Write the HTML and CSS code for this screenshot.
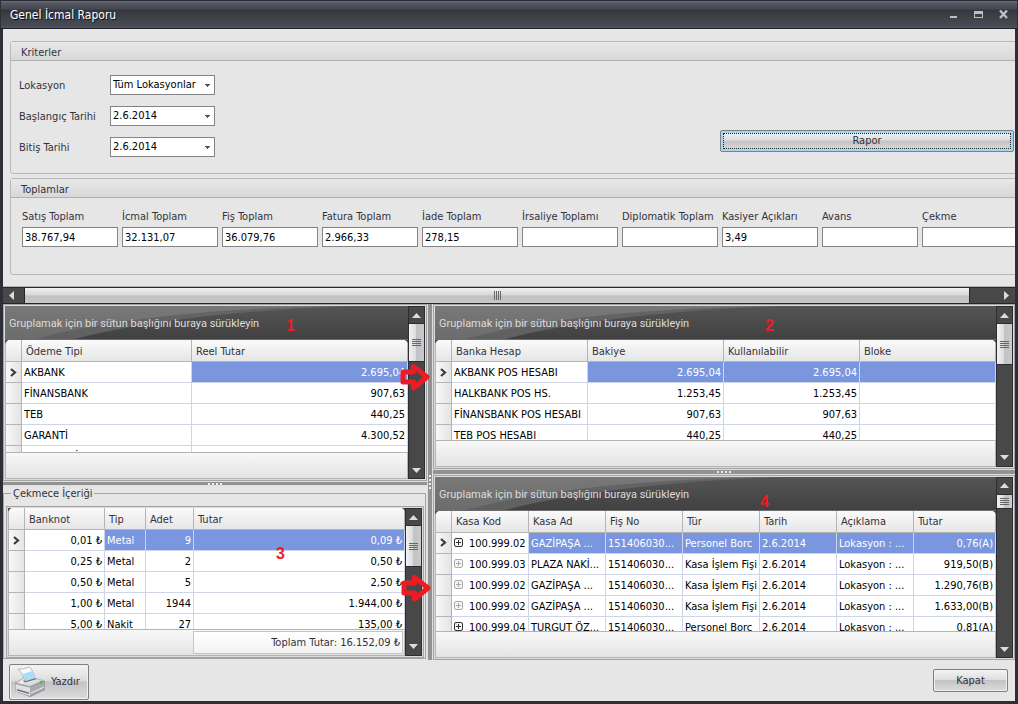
FILE: index.html
```html
<!DOCTYPE html>
<html lang="tr">
<head>
<meta charset="utf-8">
<title>Genel İcmal Raporu</title>
<link rel="stylesheet" href="styles.css">
</head>
<body>
<svg class="defs" aria-hidden="true">
  <defs>
    <linearGradient id="dark" x1="0" y1="0" x2="0" y2="1"><stop offset="0" stop-color="#555"/><stop offset="1" stop-color="#414141"/></linearGradient>
    <linearGradient id="mid" x1="0" y1="0" x2="0" y2="1"><stop offset="0" stop-color="#646464"/><stop offset="1" stop-color="#606060"/></linearGradient>
    <linearGradient id="top" x1="0" y1="0" x2="1" y2="1"><stop offset="0" stop-color="#fff"/><stop offset="1" stop-color="#c4c6ca"/></linearGradient>
    <symbol id="swoosh" viewBox="0 0 1200 33">
      <path d="M30 33C100 14 200 3 330 0H1200V33Z" fill="url(#mid)"/>
      <path d="M70 33C130 17 230 4 350 0H1200V33Z" fill="url(#dark)"/>
    </symbol>
    <symbol id="arrow" viewBox="0 0 30 28">
      <path d="M3 9H13.500V3.500L27 14L13.500 25V19H3Z" fill="none" stroke="#ed1c24" stroke-width="5" stroke-linejoin="round"/>
    </symbol>
    <symbol id="up" viewBox="0 0 9 5"><path d="M0 5L4.5 0L9 5Z" fill="#dcdcdc"/></symbol>
    <symbol id="down" viewBox="0 0 9 5"><path d="M0 0L4.5 5L9 0Z" fill="#dcdcdc"/></symbol>
    <symbol id="pointer" viewBox="0 0 7 9"><path d="M1 1L5 4.5L1 8" fill="none" stroke="#3c3c3c" stroke-width="2.2"/></symbol>
    <symbol id="plus" viewBox="0 0 9 9"><rect x=".5" y=".5" width="8" height="8" rx="1.5" fill="#f4f4f4" stroke="currentColor"/><path d="M2 4.5H7M4.5 2V7" stroke="currentColor"/></symbol>
  </defs>
</svg>
<div class="window">
  <header class="titlebar">
    <h1>Genel İcmal Raporu</h1>
    <div class="window-buttons">
      <button type="button" aria-label="Simge durumuna küçült"><svg width="9" height="9"><path d="M1 6h7v2H1z" fill="#b9c0ca"/></svg></button>
      <button type="button" aria-label="Ekranı kapla"><svg width="9" height="9"><path d="M0 1h9v7H0zM1 4v3h7V4z" fill="#b9c0ca" fill-rule="evenodd"/></svg></button>
      <button type="button" aria-label="Pencereyi kapat"><svg width="9" height="9"><path d="M1 .5L8 8M8 .5L1 8" stroke="#b9c0ca" stroke-width="2.3"/></svg></button>
    </div>
  </header>

  <main class="client">
    <section class="criteria">
      <div class="criteria-content">
        <section class="group">
          <h2>Kriterler</h2>
          <form class="filters">
            <div class="fields">
              <label for="lok">Lokasyon</label>
              <select id="lok"><option>Tüm Lokasyonlar</option></select>
              <label for="bas">Başlangıç Tarihi</label>
              <select id="bas"><option>2.6.2014</option></select>
              <label for="bit">Bitiş Tarihi</label>
              <select id="bit"><option>2.6.2014</option></select>
            </div>
            <button type="button" class="btn report">Rapor</button>
          </form>
        </section>
        <section class="group">
          <h2>Toplamlar</h2>
          <div class="totals">
            <label>Satış Toplam<input value="38.767,94"></label>
            <label>İcmal Toplam<input value="32.131,07"></label>
            <label>Fiş Toplam<input value="36.079,76"></label>
            <label>Fatura Toplam<input value="2.966,33"></label>
            <label>İade Toplam<input value="278,15"></label>
            <label>İrsaliye Toplamı<input value=""></label>
            <label>Diplomatik Toplam<input value=""></label>
            <label>Kasiyer Açıkları<input value="3,49"></label>
            <label>Avans<input value=""></label>
            <label>Çekme<input value=""></label>
          </div>
        </section>
      </div>
    </section>
    <div class="hscroll">
      <button type="button" aria-label="Sola kaydır"><svg width="6" height="9"><path d="M6 0L1 4.5L6 9Z" fill="#dcdcdc"/></svg></button>
      <div class="hthumb"><i></i><i></i><i></i><i></i></div>
      <button type="button" class="end" aria-label="Sağa kaydır"><svg width="6" height="9"><path d="M0 0L5 4.5L0 9Z" fill="#dcdcdc"/></svg></button>
    </div>

    <div class="split">
      <div class="side left">
        <section class="panel">
          <div class="grid">
            <div class="groupbar"><svg class="swoosh" preserveAspectRatio="none"><use href="#swoosh" width="1200" height="33"/></svg><span>Gruplamak için bir sütun başlığını buraya sürükleyin</span></div>
            <div class="rows">
              <table>
                <colgroup><col class="c-ind"><col class="c-170"><col></colgroup>
                <thead><tr><th></th><th>Ödeme Tipi</th><th>Reel Tutar</th></tr></thead>
                <tbody>
                  <tr class="sel"><td><svg class="pointer"><use href="#pointer"/></svg></td><td class="focus">AKBANK</td><td class="num">2.695,04</td></tr>
                  <tr><td></td><td>FİNANSBANK</td><td class="num">907,63</td></tr>
                  <tr><td></td><td>TEB</td><td class="num">440,25</td></tr>
                  <tr><td></td><td>GARANTİ</td><td class="num">4.300,52</td></tr>
                  <tr><td></td><td>YAPI KREDİ</td><td class="num"></td></tr>
                </tbody>
              </table>
            </div>
            <div class="footer"></div>
          </div>
          <div class="vscroll">
            <button type="button" aria-label="Yukarı"><svg><use href="#up"/></svg></button>
            <div class="vthumb t36"><i></i><i></i><i></i><i></i></div>
            <button type="button" class="end" aria-label="Aşağı"><svg><use href="#down"/></svg></button>
          </div>
        </section>
        <div class="hsplit"><i></i><i></i><i></i><i></i></div>
        <fieldset class="drawer">
          <legend>Çekmece İçeriği</legend>
          <div class="panel">
            <div class="grid">
              <div class="rows">
                <table>
                  <colgroup><col class="c-ind"><col class="c-80"><col class="c-41"><col class="c-48"><col></colgroup>
                  <thead><tr><th></th><th>Banknot</th><th>Tip</th><th>Adet</th><th>Tutar</th></tr></thead>
                  <tbody>
                    <tr class="sel"><td><svg class="pointer"><use href="#pointer"/></svg></td><td class="num focus">0,01 ₺</td><td>Metal</td><td class="num">9</td><td class="num">0,09 ₺</td></tr>
                    <tr><td></td><td class="num">0,25 ₺</td><td>Metal</td><td class="num">2</td><td class="num">0,50 ₺</td></tr>
                    <tr><td></td><td class="num">0,50 ₺</td><td>Metal</td><td class="num">5</td><td class="num">2,50 ₺</td></tr>
                    <tr><td></td><td class="num">1,00 ₺</td><td>Metal</td><td class="num">1944</td><td class="num">1.944,00 ₺</td></tr>
                    <tr><td></td><td class="num">5,00 ₺</td><td>Nakit</td><td class="num">27</td><td class="num">135,00 ₺</td></tr>
                  </tbody>
                </table>
              </div>
              <div class="footer"><output class="sum">Toplam Tutar: 16.152,09 ₺</output></div>
            </div>
            <div class="vscroll">
              <button type="button" aria-label="Yukarı"><svg><use href="#up"/></svg></button>
              <div class="vthumb t40"><i></i><i></i><i></i><i></i></div>
              <button type="button" class="end" aria-label="Aşağı"><svg><use href="#down"/></svg></button>
            </div>
          </div>
        </fieldset>
      </div>

      <div class="vsplit"><i></i><i></i><i></i><i></i></div>

      <div class="side right">
        <section class="panel">
          <div class="grid">
            <div class="groupbar"><svg class="swoosh" preserveAspectRatio="none"><use href="#swoosh" width="1200" height="33"/></svg><span>Gruplamak için bir sütun başlığını buraya sürükleyin</span></div>
            <div class="rows">
              <table>
                <colgroup><col class="c-ind"><col class="c-136"><col class="c-136"><col class="c-136"><col></colgroup>
                <thead><tr><th></th><th>Banka Hesap</th><th>Bakiye</th><th>Kullanılabilir</th><th>Bloke</th></tr></thead>
                <tbody>
                  <tr class="sel"><td><svg class="pointer"><use href="#pointer"/></svg></td><td class="focus">AKBANK POS HESABI</td><td class="num">2.695,04</td><td class="num">2.695,04</td><td></td></tr>
                  <tr><td></td><td>HALKBANK POS HS.</td><td class="num">1.253,45</td><td class="num">1.253,45</td><td></td></tr>
                  <tr><td></td><td>FİNANSBANK POS HESABI</td><td class="num">907,63</td><td class="num">907,63</td><td></td></tr>
                  <tr><td></td><td>TEB POS HESABI</td><td class="num">440,25</td><td class="num">440,25</td><td></td></tr>
                </tbody>
              </table>
            </div>
            <div class="footer"></div>
          </div>
          <div class="vscroll">
            <button type="button" aria-label="Yukarı"><svg><use href="#up"/></svg></button>
            <div class="vthumb t40"><i></i><i></i><i></i><i></i></div>
            <button type="button" class="end" aria-label="Aşağı"><svg><use href="#down"/></svg></button>
          </div>
        </section>
        <div class="hsplit"><i></i><i></i><i></i><i></i></div>
        <section class="panel">
          <div class="grid">
            <div class="groupbar"><svg class="swoosh" preserveAspectRatio="none"><use href="#swoosh" width="1200" height="33"/></svg><span>Gruplamak için bir sütun başlığını buraya sürükleyin</span></div>
            <div class="rows">
              <table>
                <colgroup><col class="c-ind"><col class="c-77"><col class="c-77"><col class="c-77"><col class="c-77"><col class="c-77"><col class="c-77"><col></colgroup>
                <thead><tr><th></th><th>Kasa Kod</th><th>Kasa Ad</th><th>Fiş No</th><th>Tür</th><th>Tarih</th><th>Açıklama</th><th>Tutar</th></tr></thead>
                <tbody>
                  <tr class="sel"><td><svg class="pointer"><use href="#pointer"/></svg></td><td class="focus"><svg class="plus"><use href="#plus"/></svg>100.999.02</td><td>GAZİPAŞA ...</td><td>151406030...</td><td>Personel Borc</td><td>2.6.2014</td><td>Lokasyon : ...</td><td class="num">0,76(A)</td></tr>
                  <tr><td></td><td><svg class="plus dim"><use href="#plus"/></svg>100.999.03</td><td>PLAZA NAKİ...</td><td>151406030...</td><td>Kasa İşlem Fişi</td><td>2.6.2014</td><td>Lokasyon : ...</td><td class="num">919,50(B)</td></tr>
                  <tr><td></td><td><svg class="plus dim"><use href="#plus"/></svg>100.999.02</td><td>GAZİPAŞA ...</td><td>151406030...</td><td>Kasa İşlem Fişi</td><td>2.6.2014</td><td>Lokasyon : ...</td><td class="num">1.290,76(B)</td></tr>
                  <tr><td></td><td><svg class="plus dim"><use href="#plus"/></svg>100.999.02</td><td>GAZİPAŞA ...</td><td>151406030...</td><td>Kasa İşlem Fişi</td><td>2.6.2014</td><td>Lokasyon : ...</td><td class="num">1.633,00(B)</td></tr>
                  <tr><td></td><td><svg class="plus"><use href="#plus"/></svg>100.999.04</td><td>TURGUT ÖZ...</td><td>151406030...</td><td>Personel Borc</td><td>2.6.2014</td><td>Lokasyon : ...</td><td class="num">0,81(A)</td></tr>
                </tbody>
              </table>
            </div>
            <div class="footer"></div>
          </div>
          <div class="vscroll">
            <button type="button" aria-label="Yukarı"><svg><use href="#up"/></svg></button>
            <div class="vthumb t12"><i></i><i></i><i></i><i></i></div>
            <button type="button" class="end" aria-label="Aşağı"><svg><use href="#down"/></svg></button>
          </div>
        </section>
      </div>

      <b class="mark m1">1</b>
      <b class="mark m2">2</b>
      <b class="mark m3">3</b>
      <b class="mark m4">4</b>
      <svg class="arrow a1"><use href="#arrow"/></svg>
      <svg class="arrow a2"><use href="#arrow"/></svg>
    </div>

    <footer class="actions">
      <button type="button" class="btn print">
        <svg width="32" height="32" viewBox="0 0 32 32" aria-hidden="true">
          <path d="M1 17L11 11L31 15V24L16 31L1 25Z" fill="#8f9195"/>
          <path d="M2 17L12 10.500L30 14.500L16 20.500Z" fill="url(#top)" stroke="#a5a7aa" stroke-width=".6"/>
          <path d="M1.500 18L16 21.500V30L1.500 25Z" fill="#dedfe2"/>
          <path d="M16 21.500L30.500 15.500V23L16 30Z" fill="#a9abb0"/>
          <path d="M3 23L15 26.500V28L3 24.500Z" fill="#6a6d72"/>
          <path d="M17 27L30 21" fill="none" stroke="#e4e4e6" stroke-width="1.200"/>
          <path d="M9 14.500L20 11.500L23 13L11 16.500Z" fill="#6c7076"/>
          <path d="M4 3Q9 4 15 1Q18 2 21 12L11 15Q10 8 4 3Z" fill="#f6fbff" stroke="#9aa3ad" stroke-width=".7"/>
          <path d="M9 8L18 5Q20 8 21 12L11 15Q11 11 9 8Z" fill="#a8dcf7"/>
          <circle cx="27" cy="16.500" r="1.700" fill="#38d430"/>
        </svg>
        Yazdır
      </button>
      <button type="button" class="btn close">Kapat</button>
    </footer>
  </main>
</div>
</body>
</html>
```
FILE: styles.css
```css
* { box-sizing: border-box; }

html, body { height: 100%; }

body {
  margin: 0;
  font-family: "DejaVu Sans Condensed", "DejaVu Sans", sans-serif;
  font-size: 11px;
  line-height: 14px;
  color: #32323c;
}

button, input, select {
  font: inherit;
  color: inherit;
  margin: 0;
}

h1, h2 { margin: 0; font-size: inherit; font-weight: normal; }

.defs { position: absolute; width: 0; height: 0; }

.window {
  display: flex;
  flex-direction: column;
  height: 100vh;
  min-height: 620px;
  padding: 0 3px 3px;
  background: #2d2f36;
  overflow: hidden;
}

.titlebar {
  display: flex;
  justify-content: space-between;
  align-items: center;
  height: 29px;
  margin: 0 -2px;
  padding: 0 9px;
  border-top: 1px solid #2a2b33;
  border-bottom: 1px solid #1f2028;
  background: linear-gradient(#70737c 0, #555863 2px, #454852 8px, #34363b 9px, #3c3e43 14px, #4a4d57 26px, #5a5d66 27px);
}

.titlebar h1 {
  font-size: 12px;
  color: #fff;
  text-shadow: 1px 1px 0 #111;
}

.window-buttons { display: flex; gap: 16px; }

.window-buttons button {
  display: flex;
  padding: 0;
  border: 0;
  background: none;
}

.client {
  flex: 1;
  display: flex;
  flex-direction: column;
  min-height: 0;
  background: #e6e6e6;
}

/* criteria and totals */
.criteria {
  overflow: hidden;
  border-bottom: 1px solid #b5b5b5;
  flex: none;
}

.criteria-content {
  display: flex;
  flex-direction: column;
  gap: 4px;
  width: 1060px;
  padding: 12px 7px 11px;
}

.group {
  border: 1px solid #b9b9b9;
  border-radius: 3px;
}

.group h2 {
  padding: 4px 10px 0;
  border-bottom: 1px solid #b0b0b0;
  background: linear-gradient(#e8e8e8, #d8d8d8);
}

.filters {
  display: flex;
  justify-content: space-between;
  align-items: flex-end;
  padding: 14px 41px 16px 8px;
}

.fields {
  display: grid;
  grid-template-columns: 91px 105px;
  row-gap: 11px;
  align-items: center;
}

.fields label { padding-top: 2px; }

.filters .report { margin-bottom: 5px; }

select, input {
  height: 20px;
  border: 1px solid #848484;
  border-radius: 0;
  background: #fff;
  color: #000;
}

select {
  appearance: none;
  padding: 0 16px 0 2px;
  background: linear-gradient(#555, #555) 94px 8px / 5px 1px no-repeat, linear-gradient(#555, #555) 95px 9px / 3px 1px no-repeat, linear-gradient(#555, #555) 96px 10px / 1px 1px no-repeat, #fff;
}

input { width: 96px; padding: 0 2px; }

.totals {
  display: flex;
  padding: 12px 11px 27px;
}

.totals label {
  display: flex;
  flex-direction: column;
  gap: 3px;
  width: 100px;
  white-space: nowrap;
}

/* buttons */
.btn {
  border: 1px solid #808080;
  border-radius: 2px;
  background: linear-gradient(#f4f4f4, #dedede 45%, #c3c3c3 50%, #dcdcdc);
  box-shadow: inset 0 0 0 1px #f0f0f0;
}

.report {
  width: 294px;
  height: 22px;
  padding: 0;
  box-shadow: inset 0 0 0 2px #a6d6f5;
  outline: 1px dotted #222;
  outline-offset: -4px;
}

/* scroll bars */
.hscroll {
  display: flex;
  flex: none;
  height: 17px;
  border: 1px solid #25262c;
  border-width: 1px 0;
  background: #484848;
}

.hscroll button {
  display: flex;
  align-items: center;
  justify-content: flex-start;
  width: 22px;
  padding: 0 0 0 5px;
  border: 0;
  border-right: 1px solid #25262c;
  background: none;
}

.hscroll .end {
  justify-content: flex-end;
  flex: 1;
  padding: 0 5px;
  border-right: 0;
}

.hthumb {
  display: flex;
  justify-content: center;
  align-items: center;
  gap: 1px;
  width: 93.4%;
  border-right: 1px solid #25262c;
  background: linear-gradient(#f2f2f2, #d6d6d6 48%, #c0c0c2 52%, #c8c8ca);
}

.hthumb i { width: 1px; height: 9px; background: #666; }

.vscroll {
  display: flex;
  flex-direction: column;
  width: 17px;
  border: 1px solid #2c2d33;
  background: #484848;
}

.vscroll button {
  display: flex;
  justify-content: center;
  align-items: center;
  height: 16px;
  padding: 0;
  border: 0;
  background: none;
}

.vscroll .end { margin-top: auto; }
.vscroll button svg { width: 9px; height: 5px; }

.vthumb {
  display: flex;
  flex-direction: column;
  justify-content: center;
  align-items: center;
  gap: 1px;
  border: 1px solid #2c2d33;
  border-width: 1px 0;
  background: linear-gradient(90deg, #f2f2f2, #dcdcdc 45%, #c2c2c4 50%, #cacacc);
}

.vthumb i { width: 9px; height: 1px; background: #666; }
.t12 { height: 15px; }
.t36 { height: 39px; }
.t40 { height: 42px; }

/* split area */
.split {
  position: relative;
  flex: 1;
  display: grid;
  grid-template-columns: 424fr 6px 582fr;
  min-height: 0;
}

.side {
  display: grid;
  min-width: 0;
  min-height: 0;
}

.left { grid-template-rows: 178fr 5px 174fr; }
.right { grid-template-rows: 165fr 6px 186fr; }

.hsplit, .vsplit {
  display: flex;
  justify-content: center;
  align-items: center;
  gap: 2px;
  background: #929292;
  border: 1px solid #dedede;
  border-width: 1px 0;
}

.vsplit { flex-direction: column; border-width: 0 1px; }
.hsplit i, .vsplit i { width: 2px; height: 2px; background: #eee; }

.panel {
  display: flex;
  min-width: 0;
  min-height: 0;
  padding: 1px;
  border: 1px solid #a3a3a3;
  background: #dcdcdc;
}

.grid {
  flex: 1;
  display: flex;
  flex-direction: column;
  min-width: 0;
  background: #484848;
}

.groupbar {
  position: relative;
  display: flex;
  align-items: center;
  flex: none;
  height: 34px;
  padding: 2px 0 0 4px;
  overflow: hidden;
  color: #dcdcdc;
  background: linear-gradient(#787878, #6c6c6c);
  font-family: Roboto, sans-serif;
  white-space: nowrap;
}

.swoosh {
  position: absolute;
  left: 0;
  top: 0;
  width: 1200px;
  height: 34px;
}

.groupbar span { position: relative; }

.rows {
  flex: 1;
  min-height: 0;
  overflow: hidden;
  border-left: 1px solid #b4b4b4;
  border-radius: 5px 5px 0 0;
  background: #fff;
}

table {
  width: 100%;
  table-layout: fixed;
  border-spacing: 0;
}

.c-ind { width: 16px; }
.c-41 { width: 41px; }
.c-48 { width: 48px; }
.c-77 { width: 77px; }
.c-80 { width: 80px; }
.c-136 { width: 136px; }
.c-170 { width: 170px; }

th, td {
  overflow: hidden;
  white-space: nowrap;
  border-right: 1px solid #cdd5e6;
  border-bottom: 1px solid #cdd5e6;
}

th {
  height: 22px;
  padding: 2px 4px 0;
  border-color: #b4b4b4;
  background: linear-gradient(#fafafa, #e6e6e6);
  font-weight: normal;
  text-align: left;
}

td {
  height: 21px;
  padding: 2px 2px 0;
  color: #000;
}

td:first-child {
  padding: 0 4px;
  border-color: #b4b4b4;
  background: linear-gradient(90deg, #f8f8f8, #e4e4e4);
}

.num { text-align: right; }

.sel td:not(:first-child):not(.focus) {
  background: #7a96df;
  color: #fff;
}

.pointer { display: block; width: 7px; height: 9px; }

.plus { width: 9px; height: 9px; margin-right: 6px; color: #333; }
.dim { color: #aaa; }

.footer {
  display: flex;
  justify-content: flex-end;
  flex: none;
  height: 27px;
  border: 1px solid #b4b4b4;
  background: linear-gradient(#f8f8f8, #e4e4e4);
}

.sum {
  width: 210px;
  margin: 1px;
  padding: 4px 2px;
  border: 1px solid #c4c4c4;
  background: linear-gradient(#fff, #f2f2f2);
  text-align: right;
}

.drawer {
  display: flex;
  min-width: 0;
  min-height: 0;
  margin: 0 1px 1px 0;
  padding: 5px 1px 0 2px;
  border: 1px solid #a3a3a3;
}

.drawer legend { padding: 1px 2px 0; margin-left: 5px; }
.drawer .panel { flex: 1; }

/* annotations over the grids */
.mark, .arrow { position: absolute; }

.mark {
  font: bold 16px/16px "Liberation Sans", Arial, sans-serif;
  color: #ed1c24;
}

.m1 { left: 283px; top: 14px; }
.m2 { left: 762px; top: 14px; }
.m3 { left: 273px; top: 242px; }
.m4 { left: 757px; top: 190px; }

.arrow { width: 30px; height: 28px; }
.a1 { left: 397px; top: 59px; }
.a2 { left: 398px; top: 270px; }

/* bottom bar */
.actions {
  display: flex;
  justify-content: space-between;
  flex: none;
  height: 41px;
  padding: 4px 7px 1px 6px;
}

.print {
  display: flex;
  align-items: center;
  gap: 5px;
  width: 80px;
  padding: 0 4px;
}

.close {
  width: 75px;
  height: 23px;
  margin-top: 5px;
  padding: 0;
}
```
